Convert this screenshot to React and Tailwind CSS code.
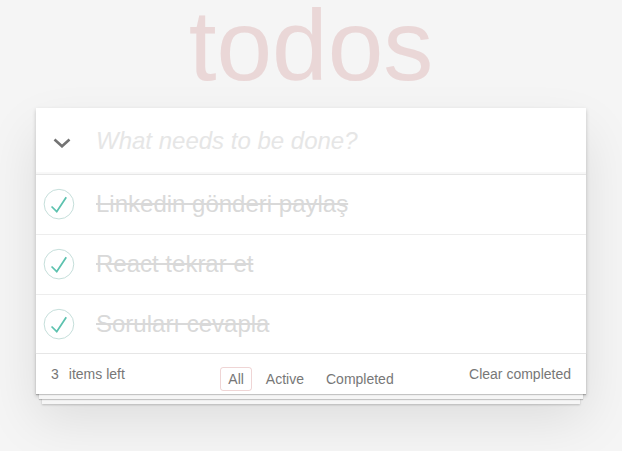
import React, { useState } from 'react';

const CheckIcon = () => (
  <svg width="40" height="40" viewBox="-10 -18 100 135" className="shrink-0">
    <circle cx="50" cy="50" r="50" fill="none" stroke="#bddad5" strokeWidth="3" />
    <path fill="#5dc2af" d="M72 25L42 71 27 56l-4 4 20 20 34-52z" />
  </svg>
);

const todos = [
  { id: 1, text: 'Linkedin gönderi paylaş' },
  { id: 2, text: 'React tekrar et' },
  { id: 3, text: 'Soruları cevapla' },
];

const App = () => {
  const [value, setValue] = useState('');
  const [filter, setFilter] = useState('All');

  return (
    <div className="min-h-screen bg-[#f5f5f5] font-['Liberation_Sans',Arial,sans-serif] text-[14px] text-[#4d4d4d]">
      <h1 className="text-center text-[100px] leading-[90px] font-normal text-[#ead7d7]">todos</h1>

      <div className="mx-auto mt-[18px] w-[550px] bg-white shadow-[0_2px_4px_0_rgba(0,0,0,0.2),0_25px_50px_0_rgba(0,0,0,0.1)]">
        <div className="flex h-[66px] items-center shadow-[inset_0_-2px_1px_rgba(0,0,0,0.03)]">
          <div className="flex w-[60px] shrink-0 pl-[17px] pt-[4px]">
            <svg width="18" height="10" viewBox="0 0 18 10">
              <polyline points="1.5,1.5 9,8.3 16.5,1.5" fill="none" stroke="#737373" strokeWidth="2.6" />
            </svg>
          </div>
          <input
            placeholder="What needs to be done?"
            value={value}
            onChange={(e) => setValue(e.target.value)}
            className="flex-1 bg-transparent pr-4 text-[24px] leading-[1.4] outline-none placeholder:italic placeholder:text-[#e6e6e6]"
          />
        </div>

        <ul className="border-t border-[#e6e6e6]">
          {todos.map((todo, index) => (
            <li
              key={todo.id}
              className={`flex items-center ${index < todos.length - 1 ? 'border-b border-[#ededed]' : ''}`}
            >
              <CheckIcon />
              <span className="ml-5 py-[15px] text-[24px] leading-[1.2] text-[#d9d9d9] line-through">
                {todo.text}
              </span>
            </li>
          ))}
        </ul>

        <div className="grid h-[41px] grid-cols-[1fr_auto_1fr] border-t border-[#e6e6e6] px-[15px] text-[#777] shadow-[0_1px_1px_rgba(0,0,0,0.2),0_8px_0_-3px_#f6f6f6,0_9px_1px_-3px_rgba(0,0,0,0.2),0_16px_0_-6px_#f6f6f6,0_17px_2px_-6px_rgba(0,0,0,0.2)]">
          <div className="flex items-start pt-[10px] leading-[20px]">
            <span>3</span>
            <span className="ml-[10px]">items left</span>
          </div>
          <div className="flex items-start pt-[13px]">
            {['All', 'Active', 'Completed'].map((f) => (
              <button
                key={f}
                onClick={() => setFilter(f)}
                className={`mx-[3px] rounded-[3px] border px-[7px] py-[3px] leading-[16px] ${
                  filter === f ? 'border-[rgba(175,47,47,0.2)]' : 'border-transparent'
                }`}
              >
                {f}
              </button>
            ))}
          </div>
          <div className="flex items-start justify-end pt-[10px] leading-[20px]">
            <button>Clear completed</button>
          </div>
        </div>
      </div>
    </div>
  );
};

export default App;
